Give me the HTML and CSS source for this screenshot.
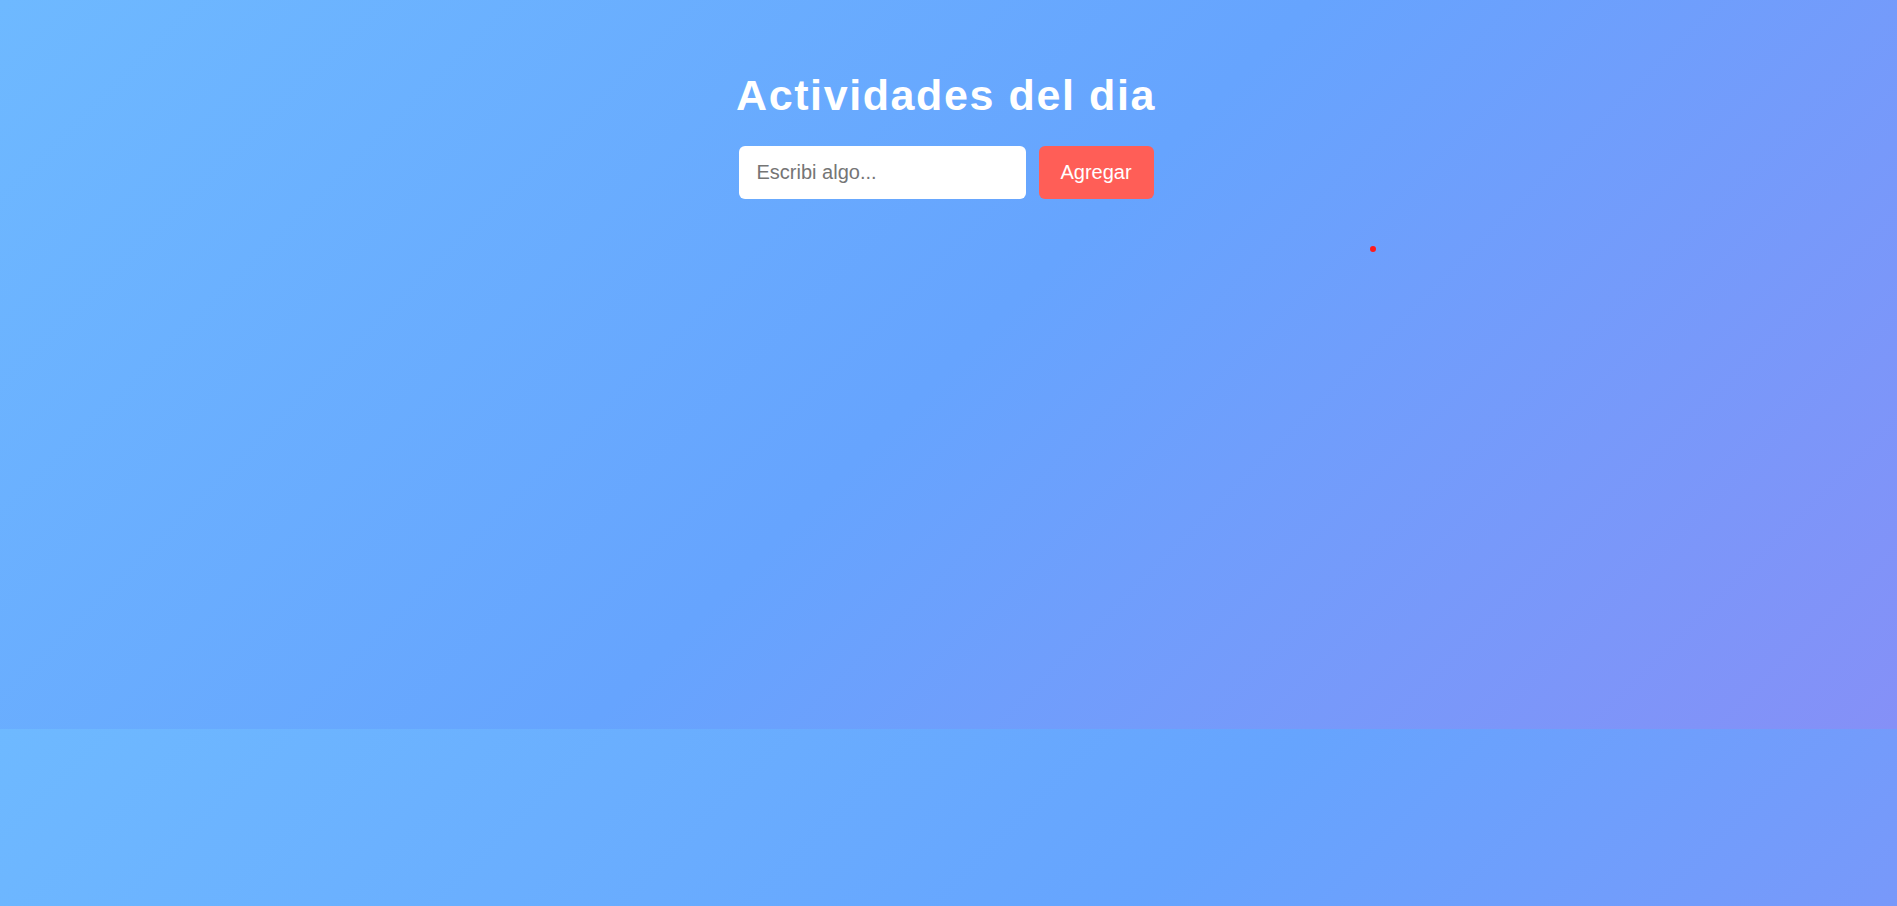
FILE: index.html
```html
<!DOCTYPE html>
<html lang="es">
<head>
<meta charset="utf-8">
<title>Actividades del dia</title>
<link rel="stylesheet" href="styles.css">
</head>
<body>
  <main class="app">
    <h1 class="title">Actividades del dia</h1>
    <form class="add-form">
      <input class="add-input" type="text" placeholder="Escribi algo...">
      <button class="add-btn" type="button">Agregar</button>
    </form>
    <ul class="list"></ul>
    <div class="dot"></div>
  </main>
</body>
</html>
```

FILE: styles.css
```css
html {
  background: linear-gradient(135deg, #6eb9ff 0%, #66a4fe 50%, #8590f7 100%);
  background-size: 100% 729px;
  background-repeat: repeat-y;
  min-height: 100%;
}
body {
  margin: 0;
  font-family: "Liberation Sans", Arial, sans-serif;
}
.app {
  display: flex;
  flex-direction: column;
  align-items: center;
  padding-top: 68px;
  padding-right: 5px;
  position: relative;
  min-height: 300px;
}
.title {
  margin: 0 0 23px;
  font-size: 43px;
  line-height: 55px;
  font-weight: bold;
  letter-spacing: 1.6px;
  color: #fff;
}
.add-form {
  display: flex;
  gap: 13px;
  margin: 0;
}
.add-input {
  width: 287px;
  box-sizing: border-box;
  height: 53px;
  padding: 0 18px;
  border: none;
  border-radius: 6px;
  font-family: "Liberation Sans", Arial, sans-serif;
  font-size: 20px;
  color: #333;
  background: #fff;
  outline: none;
}
.add-input::placeholder {
  color: #757575;
}
.add-btn {
  height: 53px;
  width: 115px;
  border: none;
  border-radius: 6px;
  background: #ff5e57;
  color: #fff;
  font-family: "Liberation Sans", Arial, sans-serif;
  font-size: 20px;
  padding: 0;
}
.list {
  list-style: none;
  margin: 0;
  padding: 0;
}
.dot {
  position: absolute;
  left: 1370px;
  top: 246px;
  width: 0;
  height: 0;
  border: 3px solid #ff1a1a;
  border-radius: 50%;
}
```
